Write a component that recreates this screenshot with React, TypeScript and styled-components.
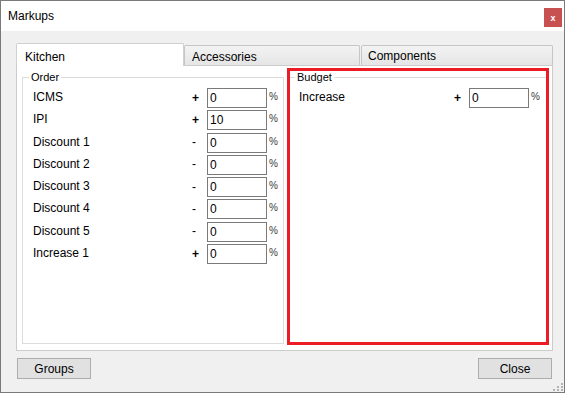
import React from "react";
import styled, { createGlobalStyle } from "styled-components";

const GlobalStyle = createGlobalStyle`
  html, body { margin: 0; padding: 0; background: #ffffff; }
  body { font-family: "Liberation Sans", Arial, sans-serif; }
  * { box-sizing: border-box; }
`;

const Window = styled.div`
  position: relative;
  width: 565px;
  height: 393px;
  border: 1px solid #7a7a7a;
  background: #f0f0f0;
  display: flex;
  flex-direction: column;
  overflow: hidden;
`;

const TitleBar = styled.div`
  height: 30px;
  flex-shrink: 0;
  background: #ffffff;
  display: flex;
  align-items: center;
  justify-content: space-between;
  padding: 0 2px 0 7px;
`;

const Title = styled.span`
  font-size: 12px;
  color: #000;
`;

const CloseX = styled.div`
  align-self: flex-start;
  margin-top: 7px;
  width: 18px;
  height: 19px;
  background: #c75050;
  color: #ffffff;
  font-size: 9px;
  font-weight: bold;
  display: flex;
  align-items: center;
  justify-content: center;
`;

const Content = styled.div`
  flex: 1;
  display: flex;
  flex-direction: column;
  padding: 12px 11px 0 15px;
`;

const TabStrip = styled.div`
  height: 22px;
  display: flex;
  align-items: flex-end;
`;

const Tab = styled.div<{ $active?: boolean; $width: number; $pl: number; $pt: number; $ml?: number }>`
  position: relative;
  z-index: ${(p) => (p.$active ? 1 : 0)};
  width: ${(p) => p.$width}px;
  height: ${(p) => (p.$active ? 23 : 20)}px;
  margin-bottom: ${(p) => (p.$active ? -1 : 0)}px;
  margin-left: ${(p) => p.$ml ?? 0}px;
  border: 1px solid ${(p) => (p.$active ? "#d0d0d0" : "#c6c6c6")};
  border-bottom: none;
  border-radius: 2px 2px 0 0;
  background: ${(p) => (p.$active ? "#ffffff" : "linear-gradient(#f3f3f3, #e5e5e5)")};
  padding-left: ${(p) => p.$pl}px;
  padding-top: ${(p) => p.$pt}px;
  font-size: 12px;
  line-height: 14px;
  color: #000;
`;

const Page = styled.div`
  height: 286px;
  background: #ffffff;
  border: 1px solid #cccccc;
  display: grid;
  grid-template-columns: 262px 262px;
  column-gap: 3px;
  padding: 0 3px 0 5px;
`;

const GroupBox = styled.fieldset`
  margin: 5px 0 6px;
  min-width: 0;
  border: 1px solid #dcdcdc;
  padding: 5px 0 0;
`;

const Legend = styled.legend<{ $ml: number }>`
  margin-left: ${(p) => p.$ml}px;
  padding: 0 2px;
  font-size: 11px;
  line-height: 12px;
  color: #000;
`;

const RedFrame = styled.div`
  margin: 2px 0 5px;
  border: 3px solid #ec1c24;
  display: flex;
  flex-direction: column;
`;

const BudgetBox = styled.fieldset`
  margin: 0;
  min-width: 0;
  border: none;
  border-top: 1px solid #dcdcdc;
  padding: 5px 0 0;
`;

const Rows = styled.div`
  display: grid;
  grid-auto-rows: 20px;
  row-gap: 2.3px;
`;

const Row = styled.div<{ $pl: number; $pr: number }>`
  display: grid;
  grid-template-columns: 1fr 20px 60px 14px;
  align-items: center;
  padding-left: ${(p) => p.$pl}px;
  padding-right: ${(p) => p.$pr}px;
  font-size: 12px;
  color: #000;
`;

const Label = styled.span`
  padding-bottom: 2px;
  white-space: nowrap;
`;

const Sign = styled.span<{ $bold: boolean }>`
  padding-left: 5px;
  padding-bottom: 1px;
  font-weight: ${(p) => (p.$bold ? "bold" : "normal")};
`;

const Field = styled.input`
  width: 60px;
  height: 20px;
  border: 1px solid #7a7a7a;
  background: #ffffff;
  padding: 0 2px;
  margin: 0;
  font-family: "Liberation Sans", Arial, sans-serif;
  font-size: 12px;
  color: #000;
  outline: none;
`;

const Pct = styled.span`
  padding-left: 2px;
  padding-bottom: 3px;
  font-size: 10px;
  color: #3a3a3a;
`;

const Footer = styled.div`
  margin-top: 7px;
  padding: 0 1px;
  display: flex;
  justify-content: space-between;
`;

const Button = styled.button`
  width: 74px;
  height: 21px;
  padding: 0;
  border: 1px solid #adadad;
  background: #e1e1e1;
  font-family: "Liberation Sans", Arial, sans-serif;
  font-size: 12px;
  color: #000;
`;

const Grip = styled.svg`
  position: absolute;
  right: 0;
  bottom: 0;
`;

type Item = { label: string; sign: string; value: string };

const orderItems: Item[] = [
  { label: "ICMS", sign: "+", value: "0" },
  { label: "IPI", sign: "+", value: "10" },
  { label: "Discount 1", sign: "-", value: "0" },
  { label: "Discount 2", sign: "-", value: "0" },
  { label: "Discount 3", sign: "-", value: "0" },
  { label: "Discount 4", sign: "-", value: "0" },
  { label: "Discount 5", sign: "-", value: "0" },
  { label: "Increase 1", sign: "+", value: "0" },
];

const budgetItems: Item[] = [{ label: "Increase", sign: "+", value: "0" }];

function MarkupRow({ item, pl, pr }: { item: Item; pl: number; pr: number }) {
  return (
    <Row $pl={pl} $pr={pr}>
      <Label>{item.label}</Label>
      <Sign $bold={item.sign === "+"}>{item.sign}</Sign>
      <Field readOnly value={item.value} />
      <Pct>%</Pct>
    </Row>
  );
}

export default function App() {
  const dots: [number, number][] = [
    [9, 3],
    [5, 6],
    [9, 6],
    [1, 9],
    [5, 9],
    [9, 9],
  ];
  return (
    <>
      <GlobalStyle />
      <Window>
        <TitleBar>
          <Title>Markups</Title>
          <CloseX>x</CloseX>
        </TitleBar>
        <Content>
          <TabStrip>
            <Tab $active $width={168} $pl={8} $pt={6}>Kitchen</Tab>
            <Tab $width={176} $pl={7} $pt={4}>Accessories</Tab>
            <Tab $width={192} $pl={6} $pt={3} $ml={1}>Components</Tab>
          </TabStrip>
          <Page>
            <GroupBox>
              <Legend $ml={6}>Order</Legend>
              <Rows>
                {orderItems.map((it) => (
                  <MarkupRow key={it.label} item={it} pl={10} pr={2} />
                ))}
              </Rows>
            </GroupBox>
            <RedFrame>
              <BudgetBox>
                <Legend $ml={5}>Budget</Legend>
                <Rows>
                  {budgetItems.map((it) => (
                    <MarkupRow key={it.label} item={it} pl={9} pr={3} />
                  ))}
                </Rows>
              </BudgetBox>
            </RedFrame>
          </Page>
          <Footer>
            <Button>Groups</Button>
            <Button>Close</Button>
          </Footer>
        </Content>
        <Grip width="12" height="12" viewBox="0 0 12 12">
          {dots.map(([x, y]) => (
            <rect key={`${x}-${y}`} x={x} y={y} width="2" height="2" fill="#b4b4b4" />
          ))}
        </Grip>
      </Window>
    </>
  );
}
